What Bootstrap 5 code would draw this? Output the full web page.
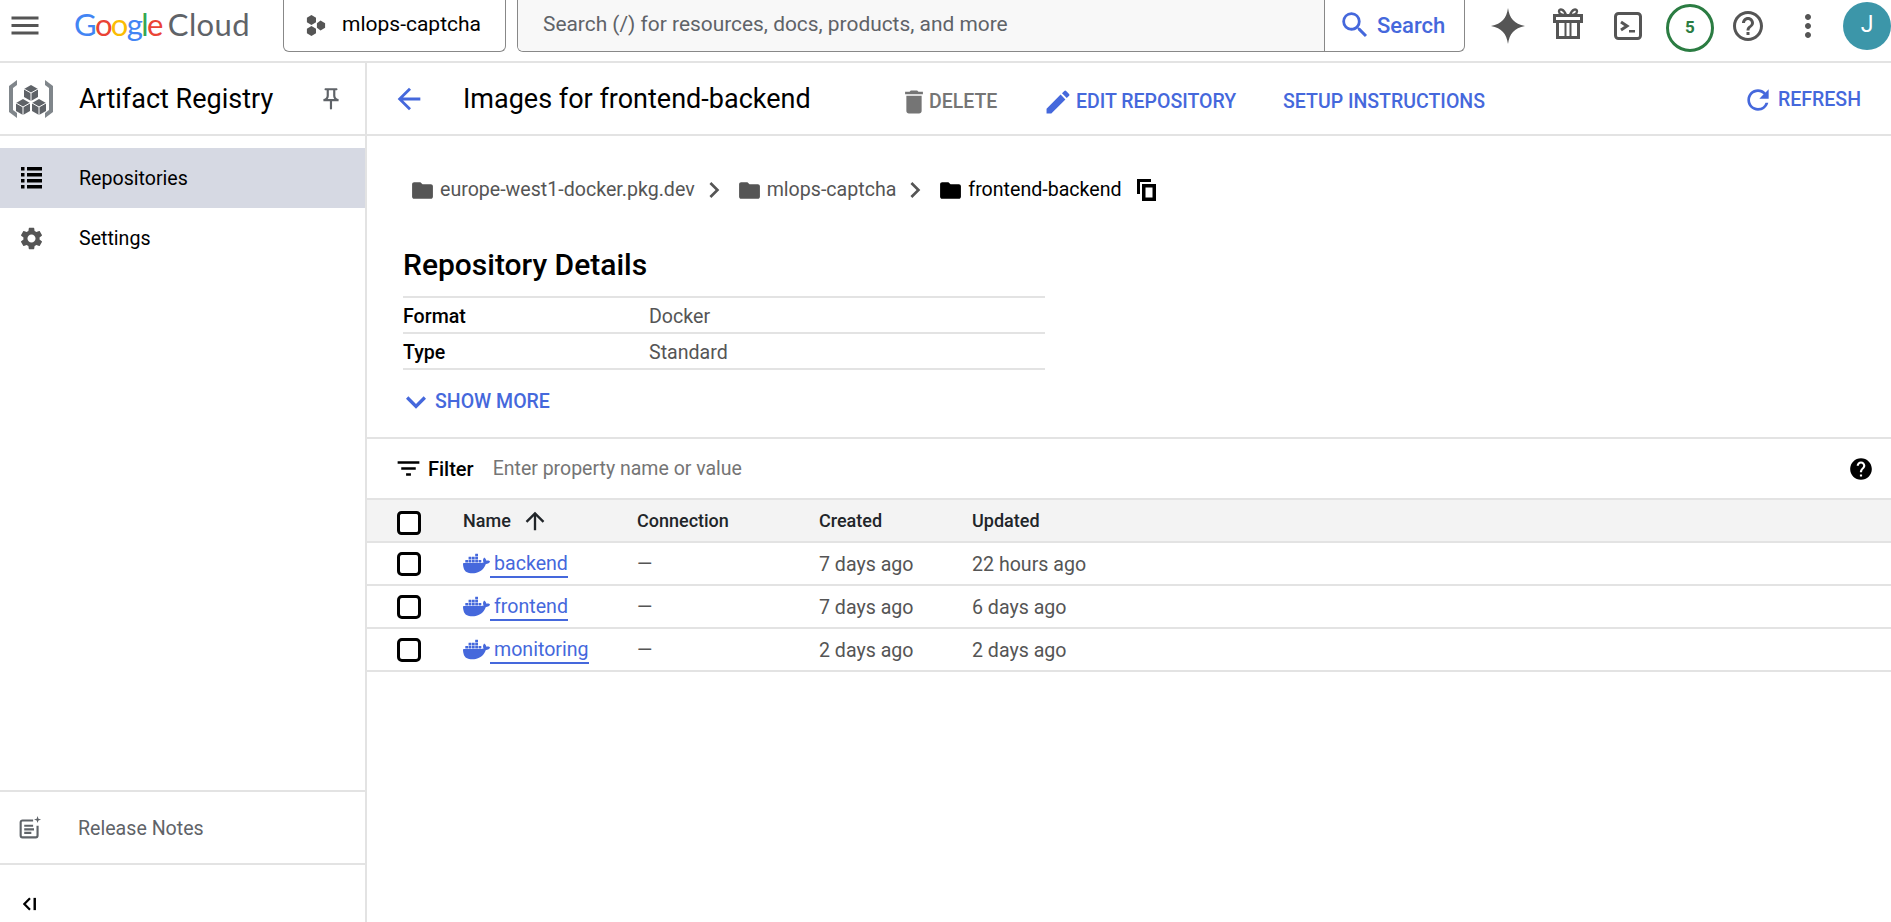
<!DOCTYPE html>
<html lang="en">
<head>
    <meta charset="UTF-8">
    <meta name="viewport" content="width=device-width, initial-scale=1.0">
    <title>Artifact Registry</title>
    <link href="https://cdn.jsdelivr.net/npm/bootstrap@5.3.0/dist/css/bootstrap.min.css" rel="stylesheet">
    <style>
        body {
            font-family: Roboto, sans-serif;
            font-size: 19.6px;
            color: #000;
            background: #fff;
            height: 922px;
            overflow: hidden;
        }
        svg { display: block; flex: none; fill: currentColor; }
        .ic-grey { color: #5f6368; }
        .ic-dark { color: #555; }
        .blue { color: #4568dc; }
        .sub { color: #555; }
        .top-bar { height: 63px; border-bottom: 2px solid #e3e3e3; padding: 0 0 10px 7px; }
        .logo-text { font-family: Lato, sans-serif; font-size: 31px; margin-left: 31px; width: 209px; flex: none; line-height: 1; white-space: nowrap; margin-top: -2px; }
        .logo-google { letter-spacing: -1.6px; }
        .logo-cloud { color: #5f6368; margin-left: 6px; letter-spacing: 0.4px; }
        .g-blue { color: #4285f4; }
        .g-red { color: #ea4335; }
        .g-yellow { color: #fbbc04; }
        .g-green { color: #34a853; }
        .project-chip {
            width: 223px; height: 52px; flex: none; padding-left: 22px;
            border: 1px solid #888; border-top: 0; border-radius: 0 0 6px 6px;
            font-size: 21px;
        }
        .search-box {
            width: 948px; height: 52px; flex: none; margin-left: 11px;
            border: 1px solid #888; border-top: 0; border-radius: 0 0 6px 6px; overflow: hidden;
        }
        .search-text { background: #f8f8f8; padding-left: 25px; font-size: 20.9px; color: #5f6368; border-right: 1px solid #888; }
        .search-btn { width: 139px; flex: none; padding-left: 13px; font-size: 22px; font-weight: 500; gap: 5px; }
        .top-icons { width: 60px; flex: none; }
        .top-first { margin-left: 13px; }
        .top-credits { margin-left: 2px; }
        .top-help { margin-left: -2px; }
        .gift-ic { margin-bottom: 5px; }
        .credits {
            width: 48px; height: 48px; border: 3px solid #2b7c42; border-radius: 50%;
            color: #2b7c42; font-weight: 700; font-size: 17px; margin-top: 5px;
        }
        .avatar { width: 48px; height: 48px; flex: none; border-radius: 50%; background: #3c96a9; color: #fff; font-size: 23px; margin-left: 5px; }

        .page-body { height: 859px; }
        .side-col { width: 367px; flex: none; border-right: 2px solid #e3e3e3; }
        .side-head { height: 73px; flex: none; border-bottom: 2px solid #e3e3e3; padding-left: 8px; }
        .side-title { font-size: 27px; margin-left: 25px; padding-top: 2px; width: 239px; flex: none; line-height: 1; }
        .side-item { height: 60px; flex: none; padding-left: 21px; gap: 37px; }
        .side-item span { padding-top: 2px; }
        .side-item .set-ic { margin-left: -3px; margin-right: -3px; }
        .side-active { background: #d6d9e3; margin-top: 12px; }
        .side-notes { height: 73px; flex: none; border-top: 2px solid #e3e3e3; padding-left: 18px; gap: 36px; color: #5f6368; }
        .side-notes span { padding-top: 2px; }
        .side-collapse { height: 59px; flex: none; border-top: 2px solid #e3e3e3; padding: 20px 0 0 23px; }

        .main-col { min-width: 0; }
        .head-bar { height: 73px; border-bottom: 2px solid #e3e3e3; padding: 0 30px 0 25px; }
        .head-title { font-size: 27px; margin-left: 37px; padding-top: 2px; width: 439px; flex: none; line-height: 1; }
        .act-btn { font-weight: 500; font-size: 19.5px; line-height: 1; padding-top: 6px; }
        .act-delete { width: 144px; flex: none; gap: 3px; color: #757575; }
        .act-edit { width: 237px; flex: none; gap: 6px; }
        .act-refresh { gap: 4px; padding-top: 2px; }
        .crumbs { height: 111px; padding: 0 0 3px 43px; }
        .crumb-text { margin-left: 5px; }
        .crumb-sep { margin: 0 7px 0 3px; }
        .crumb-copy { margin-left: 15px; }
        .details { padding-left: 36px; }
        .details-title { font-size: 30px; font-weight: 500; margin: 0; height: 49px; line-height: 35px; }
        .details-list { width: 642px; border-top: 2px solid #e3e3e3; }
        .details-row { height: 36px; border-bottom: 2px solid #e3e3e3; padding-top: 3px; }
        .details-key { width: 246px; font-weight: 500; }
        .more-btn { height: 67px; font-weight: 500; font-size: 19.5px; margin-left: -7px; padding-bottom: 4px; }
        .more-btn span { margin-left: -1px; }
        .filter-bar { height: 61px; border-top: 2px solid #e3e3e3; padding: 0 17px 0 27px; }
        .filter-label { font-weight: 500; margin-left: 5px; font-size: 20px; }
        .filter-hint { color: #757575; margin-left: 19px; font-size: 19.5px; }
        .img-table { table-layout: fixed; width: 100%; margin: 0; border-top: 2px solid #e3e3e3; }
        .img-table th, .img-table td { padding: 0; vertical-align: middle; border-bottom: 2px solid #e3e3e3; }
        .img-table th { background: #f3f3f3; font-weight: 500; font-size: 18px; height: 43px; }
        .img-table td { color: #555; font-size: 19.6px; height: 43px; padding-top: 2px; }
        .img-table .col-check { width: 96px; padding: 0 0 0 30px; }
        .col-name { width: 174px; }
        .col-conn { width: 182px; }
        .col-made { width: 153px; }
        .sort-gap { gap: 10px; }
        .box-check { width: 24px; height: 24px; margin: 0; display: block; border: 3px solid #000; border-radius: 3px; }
        thead .box-check { margin-top: 5px; }
        .img-link { color: #4568dc; text-decoration: none; width: fit-content; margin-top: -2px; }
        .img-name { border-bottom: 2px solid #4568dc; padding-left: 4px; line-height: 28px; height: 28px; }
    </style>
</head>
<body>
    <svg width="0" height="0" class="position-absolute">
        <symbol id="i-folder" viewBox="0 0 24 24"><path d="M10 4H4c-1.1 0-1.99.9-1.99 2L2 18c0 1.1.9 2 2 2h16c1.1 0 2-.9 2-2V8c0-1.1-.9-2-2-2h-8l-2-2z"/></symbol>
        <symbol id="i-chev" viewBox="0 0 24 24"><path d="M10 6L8.59 7.41 13.17 12l-4.58 4.59L10 18l6-6z"/></symbol>
        <symbol id="i-docker" viewBox="0 0 24 24"><path d="M13.983 11.078h2.119a.186.186 0 00.186-.185V9.006a.186.186 0 00-.186-.186h-2.119a.185.185 0 00-.185.185v1.888c0 .102.083.185.185.185m-2.954-5.43h2.118a.186.186 0 00.186-.186V3.574a.186.186 0 00-.186-.185h-2.118a.185.185 0 00-.185.185v1.888c0 .102.082.185.185.186m0 2.716h2.118a.187.187 0 00.186-.186V6.29a.186.186 0 00-.186-.185h-2.118a.185.185 0 00-.185.185v1.887c0 .102.082.185.185.186m-2.93 0h2.12a.186.186 0 00.184-.186V6.29a.185.185 0 00-.185-.185H8.1a.185.185 0 00-.185.185v1.887c0 .102.083.185.185.186m-2.964 0h2.119a.186.186 0 00.185-.186V6.29a.185.185 0 00-.185-.185H5.136a.186.186 0 00-.186.185v1.887c0 .102.084.185.186.186m5.893 2.715h2.118a.186.186 0 00.186-.185V9.006a.186.186 0 00-.186-.186h-2.118a.185.185 0 00-.185.185v1.888c0 .102.082.185.185.185m-2.93 0h2.12a.185.185 0 00.184-.185V9.006a.185.185 0 00-.184-.186h-2.12a.185.185 0 00-.184.185v1.888c0 .102.083.185.185.185m-2.964 0h2.119a.185.185 0 00.185-.185V9.006a.185.185 0 00-.184-.186h-2.12a.186.186 0 00-.186.186v1.887c0 .102.084.185.186.185m-2.92 0h2.12a.185.185 0 00.184-.185V9.006a.185.185 0 00-.184-.186h-2.12a.185.185 0 00-.184.185v1.888c0 .102.082.185.185.185M23.763 9.89c-.065-.051-.672-.51-1.954-.51-.338.001-.676.03-1.01.087-.248-1.7-1.653-2.53-1.716-2.566l-.344-.199-.226.327c-.284.438-.49.922-.612 1.43-.23.97-.09 1.882.403 2.661-.595.332-1.55.413-1.744.42H.751a.751.751 0 00-.75.748 11.376 11.376 0 00.692 4.062c.545 1.428 1.355 2.48 2.41 3.124 1.18.723 3.1 1.137 5.275 1.137.983.003 1.963-.086 2.93-.266a12.248 12.248 0 003.823-1.389c.98-.567 1.86-1.288 2.61-2.136 1.252-1.418 1.998-2.997 2.553-4.4h.221c1.372 0 2.215-.549 2.68-1.009.309-.293.55-.65.707-1.046l.098-.288Z"/></symbol>
    </svg>

    <!-- top bar -->
    <header class="top-bar d-flex align-items-center">
        <svg class="ic-dark" width="36" height="33" viewBox="0 0 24 22"><path d="M3 17h18v-2H3v2zm0-5h18v-2H3v2zm0-7v2h18V5H3z"/></svg>
        <div class="logo-text"><span class="logo-google"><span class="g-blue">G</span><span class="g-red">o</span><span class="g-yellow">o</span><span class="g-blue">g</span><span class="g-green">l</span><span class="g-red">e</span></span><span class="logo-cloud">Cloud</span></div>
        <div class="project-chip d-flex align-items-center gap-3">
            <svg class="ic-dark" width="20" height="22" viewBox="0 0 22 24"><polygon points="6,1 11,4 11,9 6,12 1,9 1,4"/><polygon points="6,13 11,16 11,21 6,24 1,21 1,16"/><polygon points="16,7 21,10 21,15 16,18 12,15 12,10"/></svg>
            <span>mlops-captcha</span>
        </div>
        <div class="search-box d-flex">
            <div class="search-text flex-grow-1 d-flex align-items-center">Search (/) for resources, docs, products, and more</div>
            <div class="search-btn blue d-flex align-items-center">
                <svg width="34" height="34" viewBox="0 0 24 24"><path d="M15.5 14h-.79l-.28-.27A6.471 6.471 0 0 0 16 9.5 6.5 6.5 0 1 0 9.5 16c1.61 0 3.09-.59 4.23-1.57l.27.28v.79l5 4.99L20.49 19l-4.99-5zm-6 0C7.01 14 5 11.99 5 9.5S7.01 5 9.5 5 14 7.01 14 9.5 11.99 14 9.5 14z"/></svg>
                <span>Search</span>
            </div>
        </div>
        <div class="top-icons top-first d-flex justify-content-center ic-dark">
            <svg width="36" height="36" viewBox="0 0 36 36"><path d="M18 0c1.6 10.5 6 15.8 17 18-11 2.2-15.4 7.5-17 18-1.6-10.5-6-15.8-17-18 11-2.2 15.4-7.5 17-18z"/></svg>
        </div>
        <div class="top-icons d-flex justify-content-center ic-dark">
            <svg class="gift-ic" width="30" height="32" viewBox="0 0 30 32"><g fill="none" stroke="currentColor" stroke-width="3"><rect x="1.5" y="8.5" width="27" height="6"/><path d="M4.5 15v15.5h21V15"/><path d="M13 8c-2-6-7-7-7-3.5C6 7 10 8 13 8zM17 8c2-6 7-7 7-3.5C24 7 20 8 17 8z" stroke-width="2.4"/><path d="M12.5 15v15M17.5 15v15" stroke-width="2"/></g></svg>
        </div>
        <div class="top-icons d-flex justify-content-center ic-dark">
            <svg width="28" height="28" viewBox="0 0 28 28"><g fill="none" stroke="currentColor"><rect x="1.5" y="1.5" width="25" height="25" rx="3" stroke-width="3"/><path d="M7 10l6 4-6 4" stroke-width="3"/></g><rect x="15" y="18" width="6" height="2.5"/></svg>
        </div>
        <div class="top-icons top-credits d-flex justify-content-center">
            <div class="credits d-flex align-items-center justify-content-center">5</div>
        </div>
        <div class="top-icons top-help d-flex justify-content-center ic-dark">
            <svg width="36" height="36" viewBox="0 0 24 24"><path d="M11 18h2v-2h-2v2zm1-16C6.48 2 2 6.48 2 12s4.48 10 10 10 10-4.48 10-10S17.52 2 12 2zm0 18c-4.41 0-8-3.59-8-8s3.59-8 8-8 8 3.59 8 8-3.59 8-8 8zm0-14c-2.21 0-4 1.79-4 4h2c0-1.1.9-2 2-2s2 .9 2 2c0 2-3 1.75-3 5h2c0-2.25 3-2.5 3-5 0-2.21-1.79-4-4-4z"/></svg>
        </div>
        <div class="top-icons d-flex justify-content-center ic-dark">
            <svg width="36" height="36" viewBox="0 0 24 24"><path d="M12 8c1.1 0 2-.9 2-2s-.9-2-2-2-2 .9-2 2 .9 2 2 2zm0 2c-1.1 0-2 .9-2 2s.9 2 2 2 2-.9 2-2-.9-2-2-2zm0 6c-1.1 0-2 .9-2 2s.9 2 2 2 2-.9 2-2-.9-2-2-2z"/></svg>
        </div>
        <div class="avatar d-flex align-items-center justify-content-center">J</div>
    </header>

    <div class="page-body d-flex">
        <!-- sidebar -->
        <aside class="side-col d-flex flex-column">
            <div class="side-head d-flex align-items-center">
                <svg width="46" height="40" viewBox="0 0 46 40">
                    <path d="M9 1L1 7v26l8 6v-5l-4-3V9l4-3zM37 1l8 6v26l-8 6v-5l4-3V9l-4-3z" fill="#80868b"/>
                    <polygon points="23,6 30,10 30,18 23,22 16,18 16,10" fill="#5f6368"/>
                    <polygon points="15,20 22,24 22,32 15,36 8,32 8,24" fill="#5f6368"/>
                    <polygon points="31,20 38,24 38,32 31,36 24,32 24,24" fill="#5f6368"/>
                    <path d="M16 10l7 4 7-4M8 24l7 4 7-4M24 24l7 4 7-4M23 14v8M15 28v8M31 28v8" fill="none" stroke="#fff"/>
                </svg>
                <div class="side-title">Artifact Registry</div>
                <svg class="ic-grey" width="26" height="26" viewBox="0 0 24 24"><path d="M14 4v5c0 1.12.37 2.16 1 3H9c.65-.86 1-1.9 1-3V4h4m3-2H7c-.55 0-1 .45-1 1s.45 1 1 1h1v5c0 1.66-1.34 3-3 3v2h5.97v7l1 1 1-1v-7H19v-2c-1.66 0-3-1.34-3-3V4h1c.55 0 1-.45 1-1s-.45-1-1-1z"/></svg>
            </div>
            <div class="side-item side-active d-flex align-items-center">
                <svg width="21" height="22" viewBox="0 0 21 22" fill="#222"><path d="M0 0h3.5v3.5H0zM6 0h15v3.5H6zM0 6h3.5v3.5H0zM6 6h15v3.5H6zM0 12h3.5v3.5H0zM6 12h15v3.5H6zM0 18h3.5v3.5H0zM6 18h15v3.5H6z"/></svg>
                <span>Repositories</span>
            </div>
            <div class="side-item d-flex align-items-center">
                <svg class="ic-dark set-ic" width="27" height="27" viewBox="0 0 24 24"><path d="M19.14 12.94c.04-.3.06-.61.06-.94 0-.32-.02-.64-.07-.94l2.03-1.58c.18-.14.23-.41.12-.61l-1.92-3.32c-.12-.22-.37-.29-.59-.22l-2.39.96c-.5-.38-1.03-.7-1.62-.94l-.36-2.54c-.04-.24-.24-.41-.48-.41h-3.84c-.24 0-.43.17-.47.41l-.36 2.54c-.59.24-1.13.57-1.62.94l-2.39-.96c-.22-.08-.47 0-.59.22L2.74 8.87c-.12.21-.08.47.12.61l2.03 1.58c-.05.3-.09.63-.09.94s.02.64.07.94l-2.03 1.58c-.18.14-.23.41-.12.61l1.92 3.32c.12.22.37.29.59.22l2.39-.96c.5.38 1.03.7 1.62.94l.36 2.54c.05.24.24.41.48.41h3.84c.24 0 .44-.17.47-.41l.36-2.54c.59-.24 1.13-.56 1.62-.94l2.39.96c.22.08.47 0 .59-.22l1.92-3.32c.12-.22.07-.47-.12-.61l-2.01-1.58zM12 15.6c-1.98 0-3.6-1.62-3.6-3.6s1.62-3.6 3.6-3.6 3.6 1.62 3.6 3.6-1.62 3.6-3.6 3.6z"/></svg>
                <span>Settings</span>
            </div>
            <div class="flex-grow-1"></div>
            <div class="side-notes d-flex align-items-center">
                <svg width="24" height="24" viewBox="0 0 27 27"><g fill="none" stroke="currentColor" stroke-width="2.4"><path d="M17 5H5a2 2 0 0 0-2 2v15a2 2 0 0 0 2 2h15a2 2 0 0 0 2-2V11"/><path d="M7 11h10M7 15h11M7 19h8"/></g><path d="M22 0l1 3 3 1-3 1-1 3-1-3-3-1 3-1z"/></svg>
                <span>Release Notes</span>
            </div>
            <div class="side-collapse d-flex align-items-center">
                <svg width="14" height="14" viewBox="0 0 16 16"><path d="M8 1.5L1.5 8 8 14.5" fill="none" stroke="#000" stroke-width="2.6"/><rect x="12" y="1" width="2.8" height="14"/></svg>
            </div>
        </aside>

        <!-- main content -->
        <main class="main-col flex-grow-1">
            <div class="head-bar d-flex align-items-center">
                <svg class="blue" width="34" height="34" viewBox="0 0 24 24"><path d="M20 11H7.83l5.59-5.59L12 4l-8 8 8 8 1.41-1.41L7.83 13H20v-2z"/></svg>
                <div class="head-title">Images for frontend-backend</div>
                <div class="act-btn act-delete d-flex align-items-center">
                    <svg width="24" height="28" viewBox="4 1 16 22"><path d="M6 19c0 1.1.9 2 2 2h8c1.1 0 2-.9 2-2V7H6v12zM19 4h-3.5l-1-1h-5l-1 1H5v2h14V4z"/></svg>
                    <span>DELETE</span>
                </div>
                <div class="act-btn act-edit blue d-flex align-items-center">
                    <svg width="24" height="28" viewBox="3 1 18 22"><path d="M3 17.25V21h3.75L17.81 9.94l-3.75-3.75L3 17.25zM20.71 7.04a1 1 0 0 0 0-1.41l-2.34-2.34a1 1 0 0 0-1.41 0l-1.83 1.83 3.75 3.75 1.83-1.83z"/></svg>
                    <span>EDIT REPOSITORY</span>
                </div>
                <div class="act-btn blue flex-grow-1">SETUP INSTRUCTIONS</div>
                <div class="act-btn act-refresh blue d-flex align-items-center">
                    <svg width="32" height="32" viewBox="0 0 24 24"><path d="M17.65 6.35A7.958 7.958 0 0 0 12 4c-4.42 0-7.99 3.58-7.99 8s3.57 8 7.99 8c3.73 0 6.84-2.55 7.73-6h-2.08A5.99 5.99 0 0 1 12 18c-3.31 0-6-2.69-6-6s2.69-6 6-6c1.66 0 3.14.69 4.22 1.78L13 11h7V4l-2.35 2.35z"/></svg>
                    <span>REFRESH</span>
                </div>
            </div>

            <div class="crumbs d-flex align-items-center">
                <svg class="ic-dark" width="25" height="25"><use href="#i-folder"/></svg>
                <span class="crumb-text sub">europe-west1-docker.pkg.dev</span>
                <svg class="ic-dark crumb-sep" width="32" height="32"><use href="#i-chev"/></svg>
                <svg class="ic-dark" width="25" height="25"><use href="#i-folder"/></svg>
                <span class="crumb-text sub">mlops-captcha</span>
                <svg class="ic-dark crumb-sep" width="32" height="32"><use href="#i-chev"/></svg>
                <svg width="25" height="25"><use href="#i-folder"/></svg>
                <span class="crumb-text">frontend-backend</span>
                <svg class="crumb-copy" width="19" height="22" viewBox="0 0 19 22"><path d="M1.5 15V1.5H14" fill="none" stroke="#000" stroke-width="3"/><rect x="6.75" y="6.75" width="10.5" height="13.5" fill="none" stroke="#000" stroke-width="3.5"/></svg>
            </div>

            <section class="details">
                <h2 class="details-title">Repository Details</h2>
                <div class="details-list">
                    <div class="details-row d-flex align-items-center"><div class="details-key">Format</div><div class="sub">Docker</div></div>
                    <div class="details-row d-flex align-items-center"><div class="details-key">Type</div><div class="sub">Standard</div></div>
                </div>
                <div class="more-btn blue d-flex align-items-center">
                    <svg width="40" height="40" viewBox="0 0 24 24"><path d="M16.59 8.59L12 13.17 7.41 8.59 6 10l6 6 6-6z"/></svg>
                    <span>SHOW MORE</span>
                </div>
            </section>

            <div class="filter-bar d-flex align-items-center">
                <svg width="29" height="29" viewBox="0 0 24 24"><path d="M10 18h4v-2h-4v2zM3 6v2h18V6H3zm3 7h12v-2H6v2z"/></svg>
                <span class="filter-label">Filter</span>
                <span class="filter-hint flex-grow-1">Enter property name or value</span>
                <svg width="26" height="26" viewBox="0 0 24 24"><path d="M12 2C6.48 2 2 6.48 2 12s4.48 10 10 10 10-4.48 10-10S17.52 2 12 2zm1 17h-2v-2h2v2zm2.07-7.75l-.9.92C13.45 12.9 13 13.5 13 15h-2v-.5c0-1.1.45-2.1 1.17-2.83l1.24-1.26c.37-.36.59-.86.59-1.41 0-1.1-.9-2-2-2s-2 .9-2 2H8c0-2.21 1.79-4 4-4s4 1.79 4 4c0 .88-.36 1.68-.93 2.25z"/></svg>
            </div>

            <table class="table img-table">
                <thead>
                    <tr>
                        <th class="col-check"><input type="checkbox" class="form-check-input box-check" aria-label="Select all"></th>
                        <th class="col-name"><div class="d-flex align-items-center sort-gap">Name <svg width="28" height="28" viewBox="0 0 24 24"><path d="M4 12l1.41 1.41L11 7.83V20h2V7.83l5.58 5.59L20 12l-8-8-8 8z"/></svg></div></th>
                        <th class="col-conn">Connection</th>
                        <th class="col-made">Created</th>
                        <th>Updated</th>
                    </tr>
                </thead>
                <tbody>
                    <tr>
                        <td class="col-check"><input type="checkbox" class="form-check-input box-check" aria-label="Select backend"></td>
                        <td><a class="img-link d-flex align-items-center" href="#"><svg width="27" height="27"><use href="#i-docker"/></svg><span class="img-name">backend</span></a></td>
                        <td>—</td><td>7 days ago</td><td>22 hours ago</td>
                    </tr>
                    <tr>
                        <td class="col-check"><input type="checkbox" class="form-check-input box-check" aria-label="Select frontend"></td>
                        <td><a class="img-link d-flex align-items-center" href="#"><svg width="27" height="27"><use href="#i-docker"/></svg><span class="img-name">frontend</span></a></td>
                        <td>—</td><td>7 days ago</td><td>6 days ago</td>
                    </tr>
                    <tr>
                        <td class="col-check"><input type="checkbox" class="form-check-input box-check" aria-label="Select monitoring"></td>
                        <td><a class="img-link d-flex align-items-center" href="#"><svg width="27" height="27"><use href="#i-docker"/></svg><span class="img-name">monitoring</span></a></td>
                        <td>—</td><td>2 days ago</td><td>2 days ago</td>
                    </tr>
                </tbody>
            </table>
        </main>
    </div>

    <script src="https://cdn.jsdelivr.net/npm/bootstrap@5.3.0/dist/js/bootstrap.bundle.min.js"></script>
</body>
</html>
